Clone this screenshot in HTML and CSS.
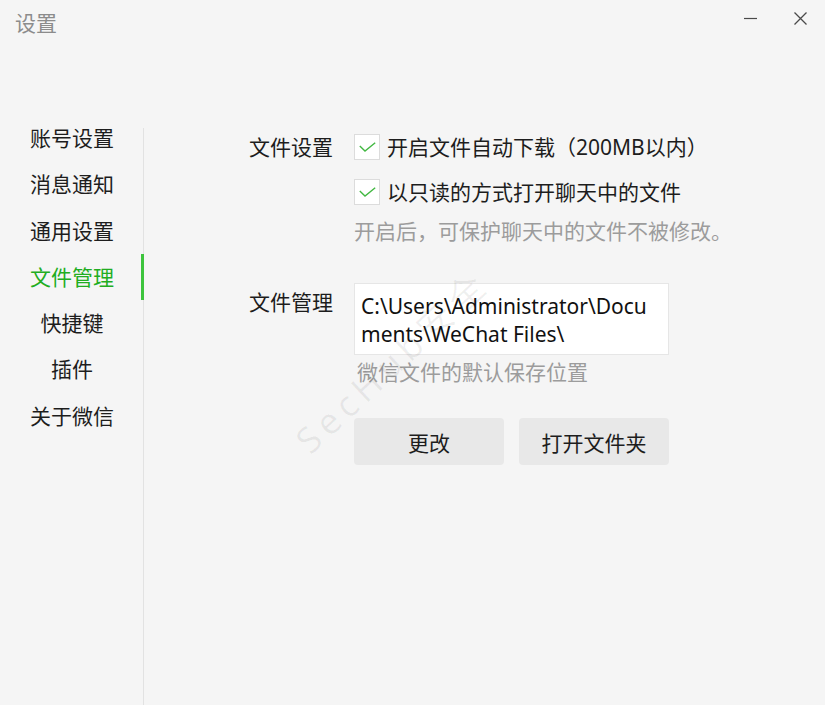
FILE: index.html
```html
<!DOCTYPE html>
<html lang="zh-CN">
<head>
  <meta charset="UTF-8">
  <title>设置</title>
  <link rel="stylesheet" href="styles.css">
</head>
<body>
  <div class="window">
    <div class="titlebar">
      <div class="title">设置</div>
      <div class="controls">
        <svg class="ctl" width="13" height="13" viewBox="0 0 13 13"><line x1="0" y1="6.5" x2="13" y2="6.5" stroke="#4a4a4a" stroke-width="1.2"/></svg>
        <svg class="ctl" width="13" height="13" viewBox="0 0 13 13"><path d="M0.5 0.5 L12.5 12.5 M12.5 0.5 L0.5 12.5" stroke="#4a4a4a" stroke-width="1.3" fill="none"/></svg>
      </div>
    </div>

    <div class="main">
      <nav class="sidebar">
        <ul class="menu">
          <li class="menu-item">账号设置</li>
          <li class="menu-item">消息通知</li>
          <li class="menu-item">通用设置</li>
          <li class="menu-item active">文件管理</li>
          <li class="menu-item">快捷键</li>
          <li class="menu-item">插件</li>
          <li class="menu-item">关于微信</li>
        </ul>
      </nav>

      <section class="content">
        <div class="row">
          <div class="label">文件设置</div>
          <div class="field">
            <div class="check">
              <span class="box"><svg width="17" height="10" viewBox="0 0 17 10"><path d="M0.8 4 L6 9 L16.2 0.8" stroke="#42b842" stroke-width="1.4" fill="none"/></svg></span>
              <span class="check-text">开启文件自动下载（200MB以内）</span>
            </div>
            <div class="check">
              <span class="box"><svg width="17" height="10" viewBox="0 0 17 10"><path d="M0.8 4 L6 9 L16.2 0.8" stroke="#42b842" stroke-width="1.4" fill="none"/></svg></span>
              <span class="check-text">以只读的方式打开聊天中的文件</span>
            </div>
            <div class="hint hint-read">开启后，可保护聊天中的文件不被修改。</div>
          </div>
        </div>

        <div class="row row-path">
          <div class="label label-path">文件管理</div>
          <div class="field">
            <div class="pathbox">C:\Users\Administrator\Documents\WeChat Files\</div>
            <div class="hint hint-path">微信文件的默认保存位置</div>
            <div class="buttons">
              <button class="btn">更改</button>
              <button class="btn">打开文件夹</button>
            </div>
          </div>
        </div>
      </section>
    </div>

    <div class="watermark">SecHub安全</div>
  </div>
</body>
</html>
```

FILE: styles.css
```css
body {
  margin: 0;
  padding: 0;
  font-family: 'Noto Sans', 'Noto Sans CJK SC', sans-serif;
  background-color: #f5f5f5;
  color: #1d1d1d;
  overflow: hidden;
}

.window {
  position: relative;
  width: 825px;
  height: 705px;
  display: flex;
  flex-direction: column;
  overflow: hidden;
}

/* barra de titulo */
.titlebar {
  height: 128px;
  display: flex;
  justify-content: space-between;
  align-items: flex-start;
  padding: 0 18px 0 15px;
  box-sizing: border-box;
}

.title {
  margin-top: 13px;
  font-size: 21px;
  line-height: 21px;
  color: #8c8c8c;
}

.controls {
  display: flex;
  gap: 37px;
  margin-top: 12px;
}

.ctl {
  display: block;
}

.main {
  flex: 1;
  display: flex;
}

/* menu lateral */
.sidebar {
  width: 143px;
  border-right: 1px solid #e2e2e2;
}

.menu {
  list-style: none;
  margin: -13px -1px 0 0;
  padding: 0;
}

.menu-item {
  height: 46.3px;
  line-height: 46.3px;
  font-size: 21px;
  text-align: center;
  padding-left: 3px;
  border-right: 3px solid transparent;
  color: #1d1d1d;
}

.menu-item.active {
  color: #21ad21;
  border-right-color: #3dc43d;
}

/* contenido */
.content {
  flex: 1;
  padding: 6px 0 0 105px;
}

.row {
  display: flex;
}

.label {
  width: 105px;
  font-size: 21px;
  line-height: 26px;
}

.field {
  display: flex;
  flex-direction: column;
}

.check {
  display: flex;
  align-items: center;
  height: 26px;
  margin-bottom: 19px;
}

.box {
  width: 24px;
  height: 24px;
  border: 1px solid #dcdcdc;
  background-color: #fff;
  display: flex;
  align-items: center;
  justify-content: center;
}

.check-text {
  margin-left: 7px;
  font-size: 21px;
  line-height: 26px;
}

.hint {
  font-size: 21px;
  line-height: 26px;
  color: #9c9c9c;
}

.hint-read {
  margin-top: -6px;
}

.row-path {
  margin-top: 39px;
}

.label-path {
  margin-top: 6px;
}

.pathbox {
  width: 315px;
  height: 72px;
  box-sizing: border-box;
  border: 1px solid #e6e6e6;
  background-color: #fff;
  padding: 8px 8px 0 6px;
  font-size: 21px;
  line-height: 28px;
  word-break: break-all;
  color: #111;
}

.hint-path {
  margin: 4px 0 0 3px;
}

.buttons {
  display: flex;
  gap: 15px;
  margin-top: 33px;
}

.btn {
  width: 150px;
  height: 47px;
  border: none;
  border-radius: 4px;
  background-color: #e8e8e8;
  font-family: 'Noto Sans', 'Noto Sans CJK SC', sans-serif;
  font-size: 21px;
  color: #1d1d1d;
  padding: 0;
}

/* marca de agua */
.watermark {
  position: absolute;
  left: 300px;
  top: 418px;
  transform-origin: left center;
  transform: rotate(-43deg);
  font-size: 36px;
  letter-spacing: 6px;
  color: rgba(0, 0, 0, 0.06);
  white-space: nowrap;
  pointer-events: none;
}
```
